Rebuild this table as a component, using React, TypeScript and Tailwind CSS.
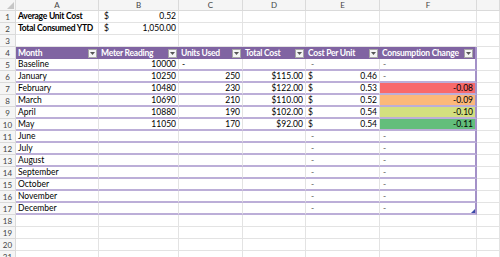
import React from "react";

const GRID = "grid grid-cols-[16px_83px_80px_64px_63px_74px_97px_1fr]";
const FONT = { fontFamily: "Lato, 'Open Sans', sans-serif" };

const headers = ["Month", "Meter Reading", "Units Used", "Total Cost", "Cost Per Unit", "Consumption Change"];

type TRow = {
  m: string;
  b?: string;
  c?: string;
  cDash?: boolean;
  d?: string;
  e?: string;
  f?: string;
  fbg?: string;
};

const tableRows: TRow[] = [
  { m: "Baseline", b: "10000", cDash: true },
  { m: "January", b: "10250", c: "250", d: "$115.00", e: "0.46" },
  { m: "February", b: "10480", c: "230", d: "$122.00", e: "0.53", f: "-0.08", fbg: "bg-[#f8696b]" },
  { m: "March", b: "10690", c: "210", d: "$110.00", e: "0.52", f: "-0.09", fbg: "bg-[#fcb87a]" },
  { m: "April", b: "10880", c: "190", d: "$102.00", e: "0.54", f: "-0.10", fbg: "bg-[#d3e07f]" },
  { m: "May", b: "11050", c: "170", d: "$92.00", e: "0.54", f: "-0.11", fbg: "bg-[#63be7b]" },
  { m: "June" },
  { m: "July" },
  { m: "August" },
  { m: "September" },
  { m: "October" },
  { m: "November" },
  { m: "December" },
];

function RowNum({ n }: { n: number }) {
  return (
    <div className="h-[12px] bg-[#f5f5f5] border-r border-b border-[#dadada] flex items-center justify-center text-[8px] text-[#444]">
      {n}
    </div>
  );
}

function Plain({ children, right }: { children?: React.ReactNode; right?: boolean }) {
  return (
    <div
      className={
        right
          ? "h-[12px] border-r border-b border-[#e3e3e3] flex items-center justify-end pr-[2px] text-[8.5px] whitespace-nowrap overflow-hidden"
          : "h-[12px] border-r border-b border-[#e3e3e3] flex items-center pl-[2px] text-[8.5px] whitespace-nowrap overflow-hidden"
      }
    >
      {children}
    </div>
  );
}

function FilterBtn() {
  return (
    <div className="ml-auto mr-[2px] w-[9px] h-[9px] bg-[#f4f4f4] border border-[#a6a6a6] flex items-center justify-center shrink-0">
      <svg width="5" height="3" viewBox="0 0 5 3">
        <polygon points="0,0 5,0 2.5,3" fill="#555" />
      </svg>
    </div>
  );
}

export default function App() {
  return (
    <div className="w-[500px] h-[257px] overflow-hidden bg-white text-black" style={FONT}>
      {/* column header */}
      <div className={GRID}>
        <div className="h-[11px] bg-[#f5f5f5] border-r border-b border-[#dadada] relative">
          <svg className="absolute right-[1px] bottom-[1px]" width="7" height="7" viewBox="0 0 7 7">
            <polygon points="7,0 7,7 0,7" fill="#c6c6c6" />
          </svg>
        </div>
        {["A", "B", "C", "D", "E", "F", ""].map((l, i) => (
          <div
            key={i}
            className="h-[11px] bg-[#f5f5f5] border-r border-b border-[#dadada] flex items-center justify-center text-[8px] text-[#444]"
          >
            {l}
          </div>
        ))}
      </div>

      {/* row 1 */}
      <div className={GRID}>
        <RowNum n={1} />
        <Plain>
          <span className="font-bold tracking-[-0.25px]">Average Unit Cost</span>
        </Plain>
        <div className="h-[12px] border-r border-b border-[#e3e3e3] flex items-center justify-between px-[2px] text-[8.5px]">
          <span className="pl-[3px]">$</span>
          <span>0.52</span>
        </div>
        <Plain />
        <Plain />
        <Plain />
        <Plain />
        <Plain />
      </div>
      {/* row 2 */}
      <div className={GRID}>
        <RowNum n={2} />
        <Plain>
          <span className="font-bold tracking-[-0.25px]">Total Consumed YTD</span>
        </Plain>
        <div className="h-[12px] border-r border-b border-[#e3e3e3] flex items-center justify-between px-[2px] text-[8.5px]">
          <span className="pl-[3px]">$</span>
          <span>1,050.00</span>
        </div>
        <Plain />
        <Plain />
        <Plain />
        <Plain />
        <Plain />
      </div>
      {/* row 3 */}
      <div className={GRID}>
        <RowNum n={3} />
        <Plain />
        <Plain />
        <Plain />
        <Plain />
        <Plain />
        <Plain />
        <Plain />
      </div>
      {/* row 4: table header */}
      <div className={GRID}>
        <RowNum n={4} />
        {headers.map((h, i) => (
          <div
            key={h}
            className={
              i === 5
                ? "h-[12px] bg-[#8064a2] border-r-2 border-[#a491c8] flex items-center pl-[2px] text-[8.5px] font-bold text-white whitespace-nowrap overflow-hidden"
                : "h-[12px] bg-[#8064a2] flex items-center pl-[2px] text-[8.5px] font-bold text-white whitespace-nowrap overflow-hidden"
            }
          >
            <span className="tracking-[-0.25px]">{h}</span>
            <FilterBtn />
          </div>
        ))}
        <Plain />
      </div>
      {/* table rows */}
      {tableRows.map((r, idx) => {
        const last = idx === tableRows.length - 1;
        const cellBase =
          "h-[12px] border-r border-r-[#e3e3e3] border-b-2 border-b-[#bcaed8] flex items-center text-[8.5px] whitespace-nowrap overflow-hidden";
        return (
          <div className={GRID} key={r.m}>
            <RowNum n={idx + 5} />
            <div className={cellBase + " pl-[2px]"}>{r.m}</div>
            <div className={cellBase + " justify-end pr-[2px]"}>{r.b}</div>
            <div className={r.cDash ? cellBase + " pl-[3px]" : cellBase + " justify-end pr-[2px]"}>
              {r.cDash ? "-" : r.c}
            </div>
            <div className={cellBase + " justify-end pr-[2px]"}>{r.d}</div>
            <div className={r.e ? cellBase + " justify-between px-[2px]" : cellBase + " pl-[5px]"}>
              {r.e ? (
                <>
                  <span>$</span>
                  <span>{r.e}</span>
                </>
              ) : (
                <span className="text-[#666]">-</span>
              )}
            </div>
            <div
              className={
                "h-[12px] border-r-2 border-r-[#a491c8] border-b-2 border-b-[#bcaed8] flex items-center text-[8.5px] whitespace-nowrap overflow-hidden relative " +
                (r.f ? (r.fbg ?? "") + " justify-end pr-[2px]" : "pl-[3px]")
              }
            >
              {r.f ? r.f : <span className="text-[#666]">-</span>}
              {last && (
                <svg className="absolute right-0 bottom-0" width="4" height="4" viewBox="0 0 4 4">
                  <polygon points="4,0 4,4 0,4" fill="#3b4ba8" />
                </svg>
              )}
            </div>
            <Plain />
          </div>
        );
      })}
      {/* empty rows */}
      {[18, 19, 20, 21].map((n) => (
        <div className={GRID} key={n}>
          <RowNum n={n} />
          <Plain />
          <Plain />
          <Plain />
          <Plain />
          <Plain />
          <Plain />
          <Plain />
        </div>
      ))}
    </div>
  );
}
